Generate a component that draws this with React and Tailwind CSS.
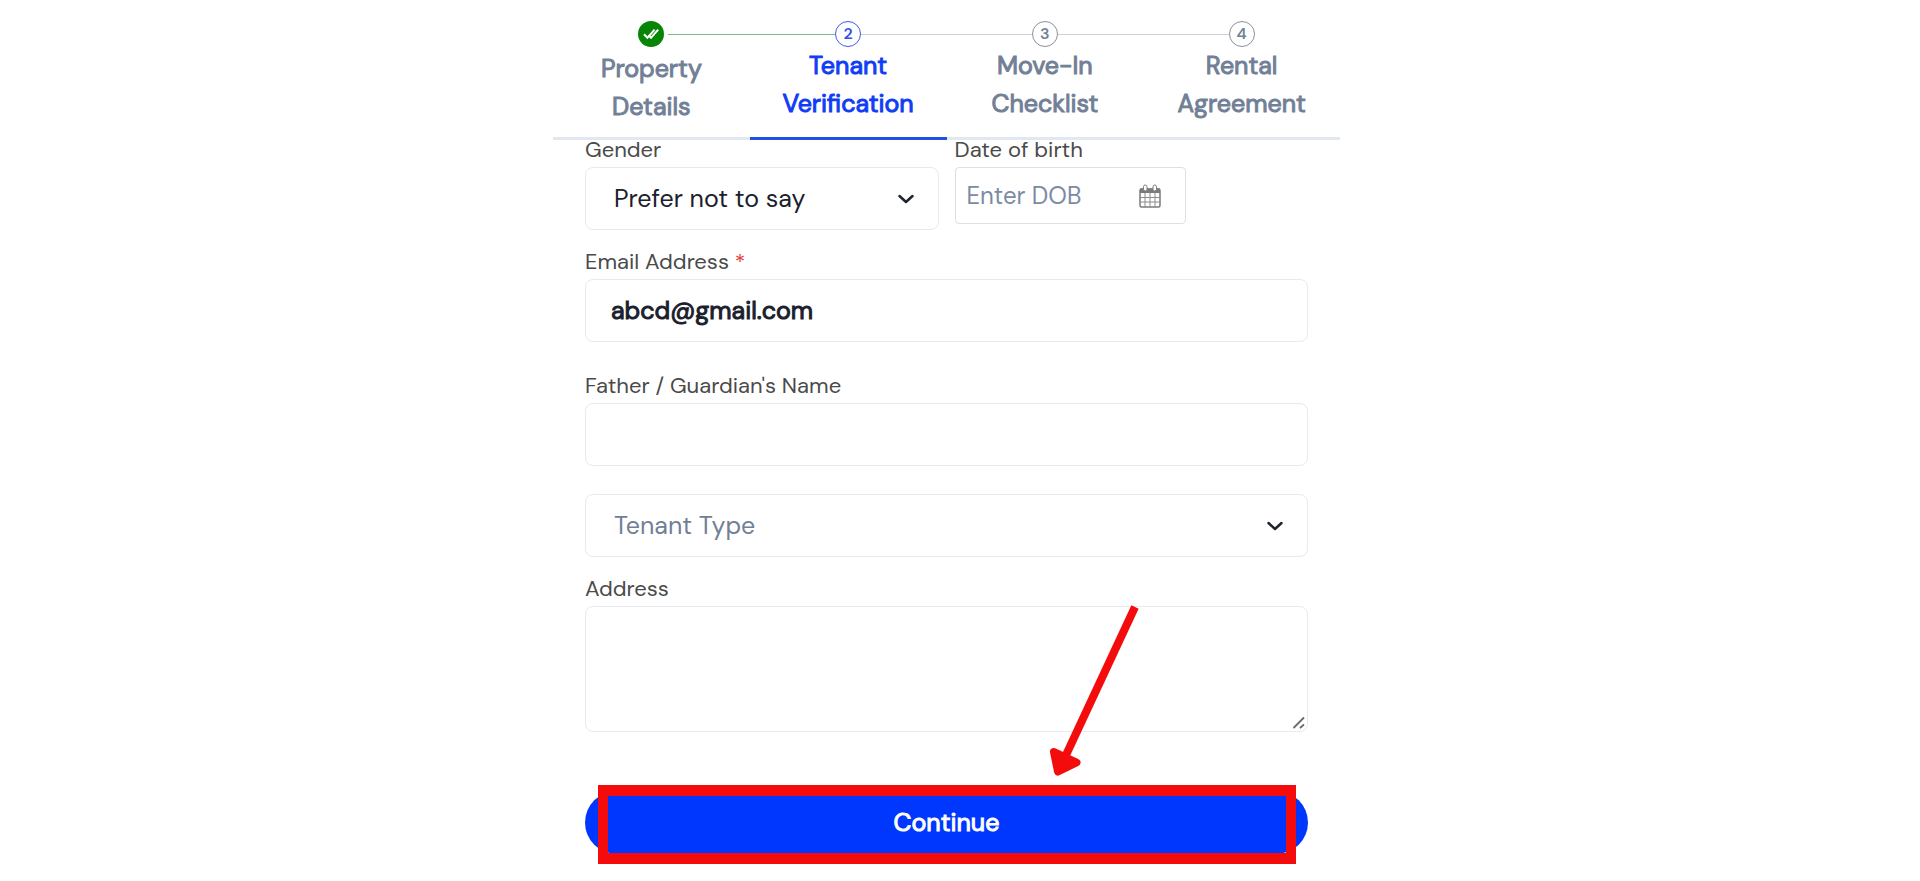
import React from 'react';
import clsx from 'clsx';

const steps = [
  { id: 1, title: ['Property', 'Details'], status: 'done' },
  { id: 2, title: ['Tenant', 'Verification'], status: 'active' },
  { id: 3, title: ['Move-In', 'Checklist'], status: 'pending' },
  { id: 4, title: ['Rental', 'Agreement'], status: 'pending' },
];

const fieldClass = 'block w-full rounded-lg border border-[#e8eaee] bg-white text-[#1a202c] outline-none';

const StepBadge = ({ step }) => {
  if (step.status === 'done') {
    return (
      <span className="mx-1 flex size-[26px] shrink-0 items-center justify-center rounded-full bg-[#078507]">
        <svg viewBox="0 0 16 12" className="w-4" fill="none" stroke="white" strokeWidth="2">
          <path d="M1 6.2 4.4 9.8 11.6 1.6" />
          <path d="M5.6 7.2 8 9.8 15.2 1.6" />
        </svg>
      </span>
    );
  }
  return (
    <span
      className={clsx(
        'flex size-[26px] shrink-0 items-center justify-center rounded-full border text-base font-semibold',
        step.status === 'active' ? 'border-[#3d5df0] text-[#2c50ee]' : 'border-[#8791a3] text-[#718096]'
      )}
    >
      {step.id}
    </span>
  );
};

const Stepper = () => (
  <ol className="flex">
    {steps.map((step, index) => (
      <li
        key={step.id}
        aria-current={step.status === 'active' ? 'step' : undefined}
        className={clsx(
          'flex-1 border-b-3 pt-[21px] pb-[11px] text-center',
          step.status === 'active' ? 'border-[#2350e2]' : 'border-[#e2e8f0]'
        )}
      >
        <div className="flex items-center">
          <span
            className={clsx(
              'h-px flex-1',
              index === 0 && 'bg-transparent',
              index === 1 && 'bg-[#7dbb80]',
              index > 1 && 'bg-[#cfd2d6]'
            )}
          />
          <StepBadge step={step} />
          <span
            className={clsx(
              'h-px flex-1',
              index === 0 && 'bg-[#7dbb80]',
              (index === 1 || index === 2) && 'bg-[#cfd2d6]',
              index === 3 && 'bg-transparent'
            )}
          />
        </div>
        <div
          className={clsx(
            'text-[25px] leading-[38px] [-webkit-text-stroke:1px]',
            step.status === 'active' ? 'text-[#0f3df5]' : 'text-[#718096]',
            step.status === 'done' && 'mt-[3px]'
          )}
        >
          {step.title[0]}
          <br />
          {step.title[1]}
        </div>
      </li>
    ))}
  </ol>
);

const Label = ({ htmlFor, required, children }) => (
  <label htmlFor={htmlFor} className="mb-[7px] block text-[22px] leading-5 text-[#4a4a4a]">
    {children}
    {required && <span className="text-[#e53e3e]"> *</span>}
  </label>
);

const Chevron = () => (
  <svg
    viewBox="0 0 16 10"
    className="pointer-events-none absolute top-1/2 right-[25px] w-4 -translate-y-1/2"
    fill="none"
    stroke="#1f2430"
    strokeWidth="2.5"
    strokeLinecap="round"
    strokeLinejoin="round"
  >
    <path d="M1.500 2l6.500 6 6.500-6" />
  </svg>
);

const CalendarIcon = () => (
  <svg viewBox="0 0 22 24" className="w-[22px]">
    <rect x="1" y="5" width="20" height="18" rx="1.5" fill="white" stroke="#7b7b7b" strokeWidth="1.5" />
    <path d="M1 4.5h20V9H1z" fill="#7b7b7b" />
    <path d="M6 9v14M11 9v14M16 9v14M1 13.5h20M1 18h20" stroke="#8c8c8c" strokeWidth="1" />
    <rect x="4.5" y="1" width="3.5" height="6" rx="1.7" fill="white" stroke="#7b7b7b" />
    <rect x="14" y="1" width="3.5" height="6" rx="1.7" fill="white" stroke="#7b7b7b" />
  </svg>
);

const App = () => {
  return (
    <div className="bg-white pr-[27px] font-['DM_Sans','Inter',sans-serif]">
      <main className="mx-auto max-w-[787px]">
        <Stepper />
        <form className="px-8 pb-6" onSubmit={(e) => e.preventDefault()}>
          <div className="flex gap-4">
            <div className="flex-1">
              <Label htmlFor="gender">Gender</Label>
              <div className="relative">
                <select id="gender" className={clsx(fieldClass, 'h-[63px] appearance-none pl-7 text-[25px]')}>
                  <option>Prefer not to say</option>
                  <option>Female</option>
                  <option>Male</option>
                </select>
                <Chevron />
              </div>
            </div>
            <div className="flex-1">
              <Label htmlFor="dob">Date of birth</Label>
              <div className="flex h-[57px] w-[231px] items-center justify-between rounded-sm border border-[#dcdfe3] pr-6 pl-[11px]">
                <input
                  id="dob"
                  type="text"
                  placeholder="Enter DOB"
                  className="w-36 text-2xl outline-none placeholder:text-[#7c8aa5]"
                />
                <CalendarIcon />
              </div>
            </div>
          </div>

          <div className="mt-[22px]">
            <Label htmlFor="email" required>Email Address</Label>
            <input
              id="email"
              type="email"
              defaultValue="abcd@gmail.com"
              className={clsx(fieldClass, 'h-[63px] px-[25px] text-[25px] [-webkit-text-stroke:1px]')}
            />
          </div>

          <div className="mt-[34px]">
            <Label htmlFor="guardian">Father / Guardian's Name</Label>
            <input id="guardian" type="text" className={clsx(fieldClass, 'h-[63px] px-[25px] text-[25px]')} />
          </div>

          <div className="relative mt-7">
            <select
              aria-label="Tenant Type"
              defaultValue=""
              className="block h-[63px] w-full appearance-none rounded-lg border border-[#e8eaee] bg-white pl-7 text-[25px] text-[#718096] outline-none"
            >
              <option value="">Tenant Type</option>
              <option value="family">Family</option>
              <option value="bachelor">Bachelor</option>
            </select>
            <Chevron />
          </div>

          <div className="mt-[22px]">
            <Label htmlFor="address">Address</Label>
            <div className="relative">
              <textarea id="address" className={clsx(fieldClass, 'h-[126px] resize-none px-[25px] py-3 text-[25px]')} />
              <svg
                viewBox="0 0 14 14"
                className="pointer-events-none absolute right-0.5 bottom-0.5 size-3.5"
                stroke="#6b6b6b"
                strokeWidth="1.8"
              >
                <path d="M1.5 12 12 1.5M8 12l4-3.5" />
              </svg>
            </div>
          </div>

          <div className="relative mt-[59px]">
            <button
              type="submit"
              className="block h-[63px] w-full rounded-full bg-[#0037ff] text-[25px] text-white [-webkit-text-stroke:1px]"
            >
              Continue
            </button>
            {/* highlight frame and pointer arrow */}
            <div className="pointer-events-none absolute -top-1.5 right-3 -bottom-2.5 left-[13px] border-x-10 border-y-11 border-[#f40b0b]" />
            <svg
              viewBox="0 0 110 180"
              className="pointer-events-none absolute right-[158px] bottom-[74px] w-[110px]"
              fill="none"
              stroke="#f40b0b"
            >
              <path d="M95 7 26 155" strokeWidth="8" />
              <path d="M14 152 36.500 162.500 18 171.500z" fill="#f40b0b" strokeWidth="8" strokeLinejoin="round" />
            </svg>
          </div>
        </form>
      </main>
    </div>
  );
};

export default App;
